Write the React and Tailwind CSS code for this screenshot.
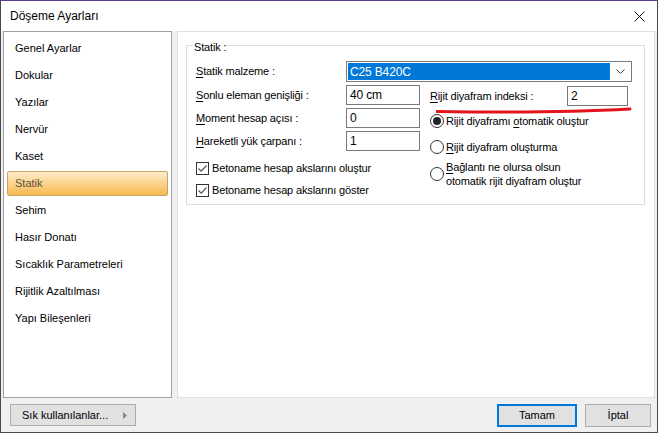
import React from "react";

const font = { fontFamily: '"Liberation Sans", Arial, sans-serif' };

const menuItems = [
  "Genel Ayarlar",
  "Dokular",
  "Yazılar",
  "Nervür",
  "Kaset",
  "Statik",
  "Sehim",
  "Hasır Donatı",
  "Sıcaklık Parametreleri",
  "Rijitlik Azaltılması",
  "Yapı Bileşenleri",
];

const Mn = ({ c }) => <span className="underline underline-offset-2">{c}</span>;

const Check = () => (
  <div className="w-[13px] h-[13px] border border-[#333] bg-white flex items-center justify-center shrink-0">
    <svg width="11" height="11" viewBox="0 0 11 11">
      <path d="M1.5 5.5 L4.2 8.2 L9.5 2.5" fill="none" stroke="#555" strokeWidth="1.2" />
    </svg>
  </div>
);

const Radio = ({ on }) => (
  <div className="w-[14px] h-[14px] rounded-full border border-[#333] bg-white flex items-center justify-center shrink-0">
    {on && <div className="w-[8px] h-[8px] rounded-full bg-[#222]" />}
  </div>
);

const Input = ({ value, w = "w-[74px]" }) => (
  <div className={`${w} h-[20px] border border-[#7a7a7a] bg-white flex items-center px-[3px] text-[12px]`}>
    {value}
  </div>
);

export default function App() {
  return (
    <div className="w-[667px] h-[443px] bg-white text-[11px] text-black" style={font}>
      <div className="w-[658px] h-[433px] border border-[#4a4a4a] border-t-[#5b3f8f] bg-[#f0f0f0] flex flex-col">
        {/* title bar */}
        <div className="h-[30px] bg-white flex items-center justify-between pl-[9px] pr-[12px] shrink-0 text-[12px]">
          <span>Döşeme Ayarları</span>
          <svg width="11" height="11" viewBox="0 0 11 11">
            <path d="M0.5 0.5 L10.5 10.5 M10.5 0.5 L0.5 10.5" stroke="#111" strokeWidth="1" />
          </svg>
        </div>

        <div className="flex gap-[5px] pl-[2px] pr-[2px] h-[367px] shrink-0">
          {/* left list */}
          <div className="w-[169px] bg-white border border-[#a0a0a0] pt-[3px] px-[3px] flex flex-col">
            {menuItems.map((item) =>
              item === "Statik" ? (
                <div
                  key={item}
                  className="h-[25px] my-[1px] flex items-center pl-[7px] rounded-[2px] border border-[#c9a46a] bg-gradient-to-b from-[#fdeccb] via-[#fbd38a] to-[#f7b84e] text-[#5a5040]"
                >
                  {item}
                </div>
              ) : (
                <div key={item} className="h-[27px] flex items-center pl-[8px]">
                  {item}
                </div>
              )
            )}
          </div>

          {/* right panel */}
          <div className="flex-1 bg-white border border-[#dfdfdf] pt-[13px] pl-[8px] pr-[9px] tracking-[-0.15px]">
            <div className="relative border border-[#dcdcdc] h-[160px] pl-[9px] pt-[15px]">
              <span className="absolute -top-[7px] left-[6px] bg-white px-[1px]">Statik :</span>

              <div className="flex items-center h-[21px]">
                <span className="w-[150px]">
                  <Mn c="S" />tatik malzeme :
                </span>
                <div className="w-[286px] h-[21px] border border-[#7a7a7a] bg-white flex items-center p-[1px]">
                  <div className="flex-1 h-full bg-[#0078d7] text-white flex items-center pl-[2px] text-[12px]">
                    C25 B420C
                  </div>
                  <div className="w-[20px] flex items-center justify-center">
                    <svg width="9" height="6" viewBox="0 0 9 6">
                      <path d="M0.5 0.5 L4.5 4.5 L8.5 0.5" fill="none" stroke="#444" strokeWidth="1" />
                    </svg>
                  </div>
                </div>
              </div>

              <div className="flex mt-[3px]">
                <div className="w-[234px] flex flex-col">
                  <div className="flex flex-col gap-[3px]">
                    <div className="flex items-center">
                      <span className="w-[150px]">
                        <Mn c="S" />onlu eleman genişliği :
                      </span>
                      <Input value="40 cm" />
                    </div>
                    <div className="flex items-center">
                      <span className="w-[150px]">
                        <Mn c="M" />oment hesap açısı :
                      </span>
                      <Input value="0" />
                    </div>
                    <div className="flex items-center">
                      <span className="w-[150px]">
                        <Mn c="H" />areketli yük çarpanı :
                      </span>
                      <Input value="1" />
                    </div>
                  </div>
                  <div className="flex flex-col gap-[6px] mt-[9px]">
                    <div className="flex items-center gap-[3px] h-[16px]">
                      <Check />
                      <span>Betoname hesap akslarını oluştur</span>
                    </div>
                    <div className="flex items-center gap-[3px] h-[16px]">
                      <Check />
                      <span>Betoname hesap akslarını göster</span>
                    </div>
                  </div>
                </div>

                <div className="flex-1 flex flex-col">
                  <div className="relative flex items-center h-[20px] mt-[1px]">
                    <span className="w-[137px]">
                      <Mn c="R" />ijit diyafram indeksi :
                    </span>
                    <Input value="2" w="w-[61px]" />
                    <svg
                      className="absolute left-[6px] top-[21px]"
                      width="198"
                      height="7"
                      viewBox="0 0 198 7"
                    >
                      <path
                        d="M1 4.5 C 60 5.5, 140 5, 194 2"
                        fill="none"
                        stroke="#e3141c"
                        strokeWidth="3"
                        strokeLinecap="round"
                      />
                    </svg>
                  </div>
                  <div className="flex items-center gap-[2px] h-[16px] mt-[7px]">
                    <Radio on />
                    <span>
                      Rijit diyaframı <Mn c="o" />tomatik oluştur
                    </span>
                  </div>
                  <div className="flex items-center gap-[2px] h-[16px] mt-[10px]">
                    <Radio />
                    <span>
                      <Mn c="R" />ijit diyafram oluşturma
                    </span>
                  </div>
                  <div className="flex items-center gap-[2px] mt-[5px]">
                    <Radio />
                    <span className="leading-[14px]">
                      <Mn c="B" />ağlantı ne olursa olsun
                      <br />
                      otomatik rijit diyafram oluştur
                    </span>
                  </div>
                </div>
              </div>
            </div>
          </div>
        </div>

        {/* footer */}
        <div className="flex-1 flex items-center justify-between pl-[9px] pr-[6px]">
          <button className="w-[126px] h-[22px] border border-[#adadad] bg-[#e1e1e1] flex items-center justify-between pl-[11px] pr-[8px]">
            <span>Sık kullanılanlar...</span>
            <svg width="4" height="7" viewBox="0 0 4 7">
              <path d="M0 0 L4 3.5 L0 7 Z" fill="#888" />
            </svg>
          </button>
          <div className="flex gap-[8px]">
            <button className="w-[80px] h-[23px] border-2 border-[#0078d7] bg-[#e1e1e1] flex items-center justify-center">
              Tamam
            </button>
            <button className="w-[66px] h-[23px] border border-[#adadad] bg-[#e1e1e1] flex items-center justify-center">
              İptal
            </button>
          </div>
        </div>
      </div>
    </div>
  );
}
